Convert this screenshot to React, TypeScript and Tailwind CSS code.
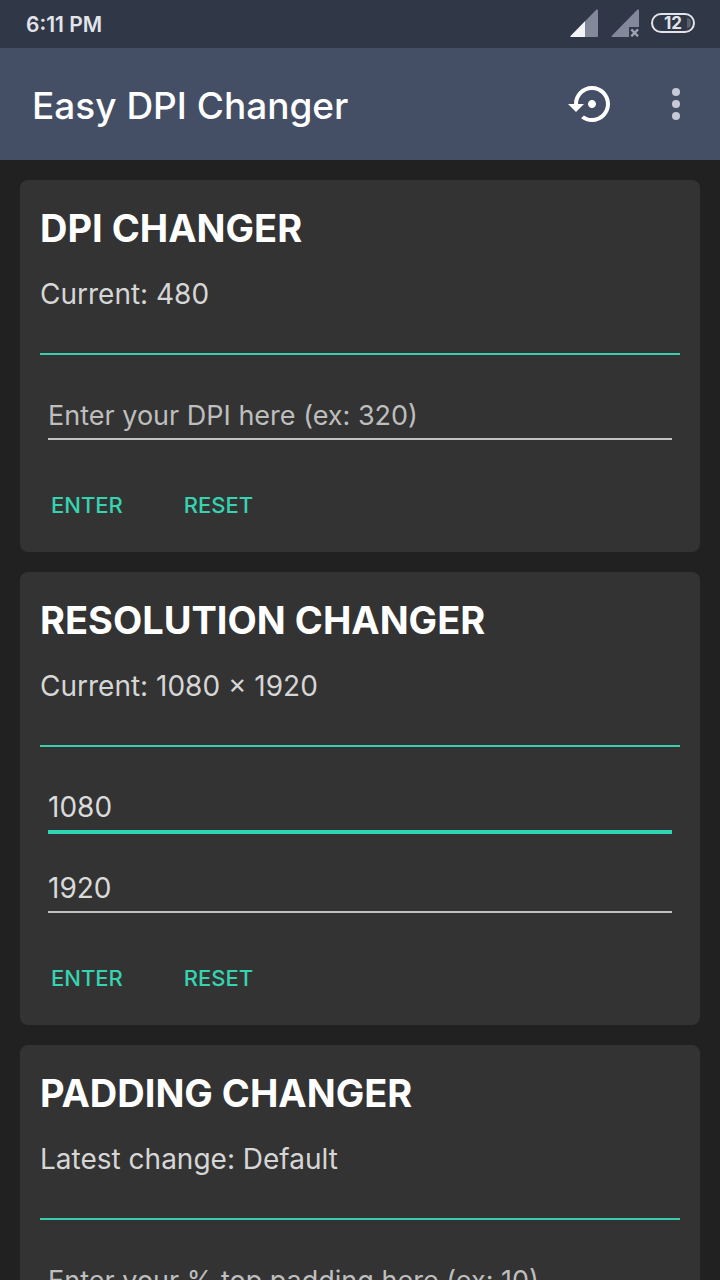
import React from "react";

function StatusBar() {
  return (
    <div className="flex h-12 items-center justify-between bg-[#303847] pl-[26px] pr-[25px] text-[#e2e4ea]">
      <span className="pt-0.5 text-[21px] font-semibold leading-6">6:11 PM</span>
      <div className="flex items-center pb-0.5">
        <svg width="28" height="28" viewBox="0 0 28 28" className="mr-[13px]" aria-hidden="true">
          <path d="M26.500 0.500Q28 0 28 1.500V27Q28 28 27 28H1Q0 28 0.600 27Z" fill="#83889a" />
          <path d="M15 12.300V28H1Q0 28 0.600 27Z" fill="#f2f3f5" />
        </svg>
        <svg width="28" height="28" viewBox="0 0 28 28" className="mr-3" aria-hidden="true">
          <path d="M26.500 0.500Q28 0 28 1.500V18H18V28H1Q0 28 0.600 27Z" fill="#83889a" />
          <path d="M20.300 20.300L27 27.300M27 20.300L20.300 27.300" stroke="#9da1af" strokeWidth="2.400" />
        </svg>
        <span className="relative flex h-5 w-11 items-center justify-center overflow-hidden rounded-full border-2 border-[#e2e4ea] text-[17px] font-bold leading-4">
          <span className="absolute inset-y-[3px] right-[2px] w-1 rounded-r-full bg-[#59606d]" />
          <span className="relative">12</span>
        </span>
      </div>
    </div>
  );
}

function Header() {
  return (
    <header className="flex h-28 items-center bg-[#444f66] pl-8 pr-5 text-white">
      <h1 className="grow pt-1 text-[37px] font-medium leading-[48px]">Easy DPI Changer</h1>
      <button aria-label="Restore defaults" className="mr-9">
        <svg width="48" height="48" viewBox="0 0 24 24" fill="currentColor" aria-hidden="true">
          <path d="M14 12c0-1.100-.9-2-2-2s-2 .9-2 2 .9 2 2 2 2-.9 2-2zm-2-9c-4.970 0-9 4.030-9 9H0l4 4 4-4H5c0-3.870 3.130-7 7-7s7 3.130 7 7-3.130 7-7 7c-1.510 0-2.910-.490-4.060-1.300l-1.420 1.440C8.040 20.300 9.940 21 12 21c4.970 0 9-4.030 9-9s-4.030-9-9-9z" />
        </svg>
      </button>
      <button aria-label="More options" className="flex h-12 w-12 items-center justify-center">
        <svg width="8" height="32" viewBox="0 0 8 32" fill="#c7cad6" aria-hidden="true">
          <circle cx="4" cy="4" r="4" />
          <circle cx="4" cy="16" r="4" />
          <circle cx="4" cy="28" r="4" />
        </svg>
      </button>
    </header>
  );
}

type FieldProps = { label: string; value?: string; active?: boolean };

function Field({ label, value, active }: FieldProps) {
  return (
    <div className="h-[81px] px-2 pt-5">
      <input
        aria-label={label}
        placeholder={label}
        defaultValue={value}
        className={
          "block w-full rounded-none bg-transparent pb-1 text-[28px] leading-9 text-[#dadada] outline-none placeholder:text-[27px] placeholder:text-[#bebebe] " +
          (active ? "h-[47px] border-b-4 border-[#2fd6b5]" : "h-[45px] border-b-2 border-[#c1c1c1]")
        }
      />
    </div>
  );
}

type CardProps = { title: string; status: string; children: React.ReactNode };

function Card({ title, status, children }: CardProps) {
  return (
    <section className="rounded-lg bg-[#333333] px-5 pb-[17px] pt-6">
      <h2 className="text-[38px] font-bold leading-[48px] text-white">{title}</h2>
      <p className="mt-6 text-[28px] leading-[37px] text-[#d6d6d6]">{status}</p>
      <hr className="mb-5 mt-10 border-0 border-t-2 border-[#38cdae]" />
      {children}
      <div className="mt-[19px] flex gap-[39px]">
        <button className="h-[60px] px-[11px] text-left text-[22px] font-medium text-[#36d3b0]">ENTER</button>
        <button className="h-[60px] px-[11px] text-left text-[22px] font-medium text-[#36d3b0]">RESET</button>
      </div>
    </section>
  );
}

export default function App() {
  return (
    <div className="h-screen overflow-hidden bg-[#212121] font-[Inter,'Noto_Sans',sans-serif]">
      <StatusBar />
      <Header />
      <main className="flex flex-col gap-5 p-5">
        <Card title="DPI CHANGER" status="Current: 480">
          <Field label="Enter your DPI here (ex: 320)" />
        </Card>
        <Card title="RESOLUTION CHANGER" status="Current: 1080 × 1920">
          <Field label="Width" value="1080" active />
          <Field label="Height" value="1920" />
        </Card>
        <Card title="PADDING CHANGER" status="Latest change: Default">
          <Field label="Enter your % top padding here (ex: 10)" />
        </Card>
      </main>
    </div>
  );
}
